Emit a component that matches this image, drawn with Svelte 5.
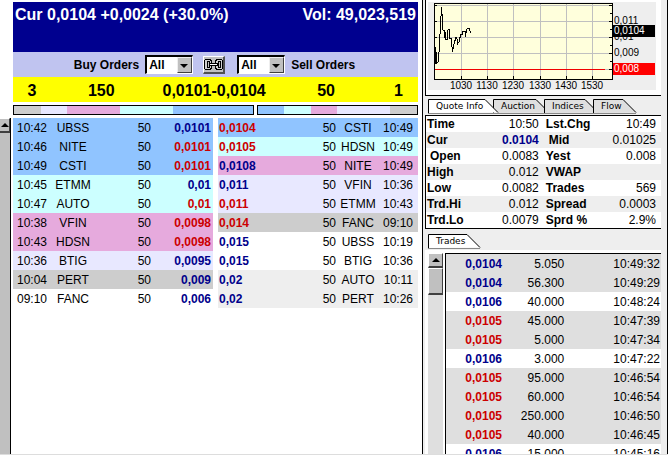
<script lang="ts">
	type Tone = "up" | "down";

	interface Order {
		time: string;
		maker: string;
		size: number;
		price: string;
		tone: Tone;
		level: string;
	}

	const order = (time: string, maker: string, price: string, tone: Tone, level: string): Order => ({
		time,
		maker,
		size: 50,
		price,
		tone,
		level,
	});

	const buys: Order[] = [
		order("10:42", "UBSS", "0,0101", "up", "blue"),
		order("10:46", "NITE", "0,0101", "down", "blue"),
		order("10:49", "CSTI", "0,0101", "down", "blue"),
		order("10:45", "ETMM", "0,01", "up", "cyan"),
		order("10:47", "AUTO", "0,01", "down", "cyan"),
		order("10:38", "VFIN", "0,0098", "down", "pink"),
		order("10:43", "HDSN", "0,0098", "down", "pink"),
		order("10:36", "BTIG", "0,0095", "up", "lilac"),
		order("10:04", "PERT", "0,009", "up", "gray"),
		order("09:10", "FANC", "0,006", "up", "plain"),
	];

	const sells: Order[] = [
		order("10:49", "CSTI", "0,0104", "down", "blue"),
		order("10:49", "HDSN", "0,0105", "down", "cyan"),
		order("10:49", "NITE", "0,0108", "up", "pink"),
		order("10:36", "VFIN", "0,011", "up", "lilac"),
		order("10:43", "ETMM", "0,011", "down", "lilac"),
		order("09:10", "FANC", "0,014", "down", "gray"),
		order("10:19", "UBSS", "0,015", "up", "plain"),
		order("10:36", "BTIG", "0,015", "up", "plain"),
		order("10:11", "AUTO", "0,02", "up", "pale"),
		order("10:26", "PERT", "0,02", "up", "pale"),
	];

	// Depth per price level, outermost level first on the buy side
	const buyDepth = [
		{ level: "gray", share: 1 },
		{ level: "lilac", share: 1 },
		{ level: "pink", share: 2 },
		{ level: "cyan", share: 2 },
		{ level: "blue", share: 3 },
	];
	const sellDepth = [
		{ level: "blue", share: 1 },
		{ level: "cyan", share: 1 },
		{ level: "pink", share: 1 },
		{ level: "lilac", share: 2 },
		{ level: "gray", share: 1 },
	];

	const quotes = [
		["Time", "10:50", "Lst.Chg", "10:49"],
		["Cur", "0.0104", "Mid", "0.01025"],
		["Open", "0.0083", "Yest", "0.008"],
		["High", "0.012", "VWAP", ""],
		["Low", "0.0082", "Trades", "569"],
		["Trd.Hi", "0.012", "Spread", "0.0003"],
		["Trd.Lo", "0.0079", "Sprd %", "2.9%"],
	];
	const indented = ["Open", "Mid"];

	const trades: { price: string; volume: string; time: string }[] = [
		{ price: "0,0104", volume: "5.050", time: "10:49:32" },
		{ price: "0,0104", volume: "56.300", time: "10:49:29" },
		{ price: "0,0106", volume: "40.000", time: "10:48:24" },
		{ price: "0,0105", volume: "45.000", time: "10:47:39" },
		{ price: "0,0105", volume: "5.000", time: "10:47:34" },
		{ price: "0,0106", volume: "3.000", time: "10:47:22" },
		{ price: "0,0105", volume: "95.000", time: "10:46:54" },
		{ price: "0,0105", volume: "60.000", time: "10:46:54" },
		{ price: "0,0105", volume: "250.000", time: "10:46:50" },
		{ price: "0,0105", volume: "40.000", time: "10:46:45" },
		{ price: "0,0106", volume: "15.000", time: "10:45:16" },
	];

	const tabs = [
		{ name: "Quote Info", width: 71 },
		{ name: "Auction", width: 57 },
		{ name: "Indices", width: 55 },
		{ name: "Flow", width: 44 },
	];
	let activeTab = $state("Quote Info");

	let buyFilter = $state("All");
	let sellFilter = $state("All");
	let linked = $state(true);

	// Linked filters follow each other
	function syncFilter(side: "buy" | "sell") {
		if (!linked) return;
		if (side === "buy") sellFilter = buyFilter;
		else buyFilter = sellFilter;
	}

	const chartTimes = ["1030", "1130", "1230", "1330", "1430", "1530"];
	const timeX = (i: number) => Math.round(33 + i * 26.2);
	const gridY = [3, 19, 35, 51, 67];
</script>

{#snippet tab(name: string, width: number, active: boolean, select: () => void)}
	<button class="tab" class:active style="width: {width}px" aria-pressed={active} onclick={select}>
		<svg {width} height="15" aria-hidden="true">
			<path d="M0.5 14 V0.5 H{width - 14} L{width - 1} 13.5" />
			<path class="edge" d="M0 14.5 H{width - 1}" />
		</svg>
		<span>{name}</span>
	</button>
{/snippet}

<div class="app">
	<main class="book">
		<div class="gutter">
			<button class="arrow" aria-label="Scroll up"></button>
		</div>
		<div class="panel">
			<header>
				<span>Cur 0,0104 +0,0024 (+30.0%)</span>
				<span>Vol: 49,023,519</span>
			</header>

			<div class="filters">
				<label for="buy-filter">Buy Orders</label>
				<div class="select">
					<select id="buy-filter" bind:value={buyFilter} onchange={() => syncFilter("buy")}>
						<option>All</option>
						<option>ECN</option>
					</select>
				</div>
				<button class="link" aria-label="Link filters" aria-pressed={linked} onclick={() => (linked = !linked)}>
					<svg width="19" height="11" viewBox="0 0 19 11" aria-hidden="true">
						<path d="M1.500 0.500 H6 L7.500 2 V9 L6 10.500 H1.500 L0.500 9.500 V1.500 Z M3 2.500 V8.500 H5 V2.500 Z" />
						<path d="M17.500 0.500 H13 L11.500 2 V9 L13 10.500 H17.500 L18.500 9.500 V1.500 Z M16 2.500 V8.500 H14 V2.500 Z" />
						<path class="pin" d="M5.500 4.500 H13.500 V6.500 H5.500 Z" />
					</svg>
				</button>
				<div class="select">
					<select id="sell-filter" bind:value={sellFilter} onchange={() => syncFilter("sell")}>
						<option>All</option>
						<option>ECN</option>
					</select>
				</div>
				<label for="sell-filter">Sell Orders</label>
			</div>

			<div class="inside">
				<div class="side buy">
					<span class="count">3</span>
					<span class="size">150</span>
					<span class="best">0,0101</span>
				</div>
				<div class="side sell">
					<span class="best">-0,0104</span>
					<span class="size">50</span>
					<span class="count">1</span>
				</div>
			</div>

			<div class="depth">
				<div class="bar" style="flex-grow: 3">
					{#each buyDepth as d}
						<i class={d.level} style="flex-grow: {d.share}"></i>
					{/each}
				</div>
				<div class="bar" style="flex-grow: 2">
					{#each sellDepth as d}
						<i class={d.level} style="flex-grow: {d.share}"></i>
					{/each}
				</div>
			</div>

			<div class="orders">
				<table aria-label="Buy orders">
					<colgroup><col class="w-time" /><col class="w-maker" /><col class="w-size" /><col /></colgroup>
					<tbody>
						{#each buys as o}
							<tr class={o.level}>
								<td class="first">{o.time}</td>
								<td class="center">{o.maker}</td>
								<td class="right">{o.size}</td>
								<td class="price right {o.tone}">{o.price}</td>
							</tr>
						{/each}
					</tbody>
				</table>
				<table aria-label="Sell orders">
					<colgroup><col /><col class="w-size" /><col class="w-maker" /><col class="w-time" /></colgroup>
					<tbody>
						{#each sells as o}
							<tr class={o.level}>
								<td class="price {o.tone}">{o.price}</td>
								<td class="right">{o.size}</td>
								<td class="center">{o.maker}</td>
								<td class="last">{o.time}</td>
							</tr>
						{/each}
					</tbody>
				</table>
			</div>
		</div>
	</main>

	<aside>
		<section class="chart">
			<svg viewBox="0 0 228 88" role="img" aria-label="Intraday price">
				<rect class="back" width="228" height="88" />
				<rect class="plot" x="6.5" y="1.5" width="178" height="76" />
				{#each gridY as y}
					<path class="grid" d="M7 {y + 0.5} H184" />
					<path class="tick" d="M7 {y + 0.5} h2 M181 {y + 0.5} h3" />
				{/each}
				{#each chartTimes as t, i}
					<path class="grid" d="M{timeX(i) + 0.5} 2 V77" />
					<path class="tick" d="M{timeX(i) + 0.5} 74 v3" />
					<text class="mid" x={timeX(i)} y="87">{t}</text>
				{/each}
				{#each [11, 27, 43, 59] as y}
					<path class="tick" d="M182 {y + 0.5} h2" />
				{/each}
				<path class="prev" d="M7 67.5 H177" />
				<path
					class="line"
					d="M7.5 45 V62 L8.5 50 V61 L10 60 L11 50 L12 32 L13.5 5 L14.5 18 L15 28 H16 V30 L17 36 V30 L18 38 L19.5 37 V29 L21 27 L22 37 L23 36 L24.5 50 L26 42 L28 35 L29.5 38 V42 L31 40 V36 L32.5 35 V32 H34.5 L35 29 H37 L37.5 35 L38.5 28 L40 26 L41 26 L42.5 31"
				/>
				<text x="186" y="22">0,011</text>
				<text x="186" y="38">0,01</text>
				<text x="186" y="54">0,009</text>
				<rect x="185" y="23" width="42" height="12" />
				<text class="tag" x="186" y="32">0,0104</text>
				<rect class="low" x="185" y="61" width="42" height="12" />
				<text class="tag" x="186" y="70">0,008</text>
			</svg>
		</section>

		<nav class="tabs">
			{#each tabs as t}
				{@render tab(t.name, t.width, t.name === activeTab, () => (activeTab = t.name))}
			{/each}
		</nav>
		<section class="quote">
			<table aria-label="Quote info">
				<colgroup><col class="q-label" /><col class="q-value" /><col class="q-label2" /><col /></colgroup>
				<tbody>
					{#each quotes as [a, av, b, bv]}
						<tr>
							<th scope="row" class:indented={indented.includes(a)}>{a}</th>
							<td class:current={a === "Cur"}>{av}</td>
							<th scope="row" class="second" class:indented={indented.includes(b)}>{b}</th>
							<td class="edge">{bv}</td>
						</tr>
					{/each}
				</tbody>
			</table>
		</section>

		<nav class="tabs lower">
			{@render tab("Trades", 53, true, () => {})}
		</nav>
		<section class="trades">
			<div class="scroll">
				<button class="arrow" aria-label="Scroll trades up"></button>
				<div class="thumb"></div>
			</div>
			<div class="list">
				<table aria-label="Trades">
					<colgroup><col class="t-price" /><col class="t-volume" /><col /></colgroup>
					<tbody>
						{#each trades as t}
							<tr class:fresh={t.price === "0,0106"}>
								<td class="price {t.price === '0,0105' ? 'down' : 'up'}">{t.price}</td>
								<td>{t.volume}</td>
								<td class="stamp">{t.time}</td>
							</tr>
						{/each}
					</tbody>
				</table>
			</div>
		</section>
	</aside>
</div>

<style>
	:global(body) {
		background: #fff;
		color: #000;
		font-family: "Liberation Sans", Arial, Helvetica, sans-serif;
		font-size: 12px;
	}
	.app {
		display: grid;
		grid-template-columns: minmax(0, 1fr) minmax(246px, 36%);
		height: 100vh;
		box-sizing: border-box;
		border-bottom: 1px solid #ddd;
		overflow: hidden;
	}
	button,
	select {
		font: inherit;
		color: inherit;
		margin: 0;
		padding: 0;
		border-radius: 0;
		cursor: pointer;
	}
	table {
		width: 100%;
		table-layout: fixed;
		border-collapse: collapse;
	}
	td,
	th {
		padding: 0;
		white-space: nowrap;
	}

	/* Order book */
	.book {
		display: flex;
		gap: 2px;
		min-height: 0;
	}
	.gutter {
		flex: none;
		width: 10px;
		margin-top: 118px;
		background: #c0c0c0;
		border-right: 1px solid #000;
	}
	.panel {
		flex: 1;
		min-width: 0;
		padding: 2px 4px 0 0;
		overflow: hidden;
	}
	.arrow {
		display: flex;
		align-items: center;
		justify-content: center;
		box-sizing: border-box;
		width: 100%;
		height: 15px;
		background: #c0c0c0;
		border: 1px solid #fff;
		border-right-color: #404040;
		border-bottom: 2px solid #404040;
	}
	.arrow::before {
		content: "";
		border: 4px solid transparent;
		border-top: none;
		border-bottom-color: #000;
	}
	.gutter .arrow {
		border-left: none;
	}
	header {
		display: flex;
		justify-content: space-between;
		min-height: 46px;
		padding: 4px 2px 0;
		background: #00008f;
		color: #fff;
		font-size: 16px;
		line-height: 18px;
		font-weight: bold;
	}
	.filters {
		display: flex;
		align-items: center;
		justify-content: center;
		gap: 6px;
		height: 25px;
		padding-right: 2px;
		background: #c0c4f0;
		font-weight: bold;
	}
	.select {
		position: relative;
		width: 48px;
		height: 19px;
	}
	.select select {
		appearance: none;
		box-sizing: border-box;
		width: 100%;
		height: 100%;
		padding-left: 2px;
		background: #fff;
		border: 2px solid #000;
		border-right: 1px solid #fff;
		border-bottom: 1px solid #fff;
		outline: none;
	}
	/* Drop-down button over the end of the field */
	.select::after {
		content: "";
		position: absolute;
		top: 2px;
		right: 1px;
		bottom: 1px;
		width: 15px;
		box-sizing: border-box;
		background: #c0c0c0;
		border: 1px solid #eee;
		border-right-color: #404040;
		border-bottom-color: #404040;
		pointer-events: none;
	}
	.select::before {
		content: "";
		position: absolute;
		z-index: 1;
		top: 9px;
		right: 5px;
		border: 4px solid transparent;
		border-bottom: none;
		border-top-color: #000;
		pointer-events: none;
	}
	.link {
		display: flex;
		align-items: center;
		justify-content: center;
		box-sizing: border-box;
		width: 22px;
		height: 18px;
		margin: 0 6px 0 4px;
		background: #c0c0c0;
		border: 1px solid #fff;
		border-right: 2px solid #505050;
		border-bottom: 2px solid #505050;
	}
	.link svg {
		flex: none;
	}
	.link path {
		fill: #d0d0d0;
		fill-rule: evenodd;
		stroke: #000;
		stroke-width: 1;
		shape-rendering: crispEdges;
	}
	.link .pin {
		fill: #fff;
	}
	.inside {
		display: flex;
		height: 25px;
		background: #ff0;
		font-size: 16px;
		line-height: 27px;
		font-weight: bold;
	}
	.side {
		display: flex;
		flex: 1;
		text-align: center;
	}
	.side.buy {
		flex: 0 0 49%;
	}
	.side .count {
		width: 19%;
	}
	.side .size {
		flex: 1;
	}
	.side .best {
		width: 30%;
	}
	.buy .best {
		text-align: right;
	}
	.sell .best {
		text-align: left;
	}
	.depth {
		display: flex;
		gap: 3px;
		margin: 3px 0;
	}
	.bar {
		display: flex;
		flex-basis: 0;
		height: 8px;
		border: 1px solid #000;
	}
	.bar i {
		flex-basis: 0;
	}
	.orders {
		display: flex;
		align-items: flex-start;
		gap: 5px;
	}
	.orders table {
		flex: 1;
		min-width: 0;
	}
	.orders td {
		height: 19px;
	}
	.w-time {
		width: 19%;
	}
	.w-maker {
		width: 22%;
	}
	.w-size {
		width: 28%;
	}
	.first {
		padding-left: 4px;
	}
	.last {
		padding-right: 5px;
		text-align: right;
	}
	.center {
		text-align: center;
	}
	.right {
		text-align: right;
	}
	.price {
		padding: 0 2px 0 1px;
		font-weight: bold;
	}
	.up {
		color: #00008b;
	}
	.down {
		color: #c00;
	}
	.blue {
		background: #90c4ff;
	}
	.cyan {
		background: #cff;
	}
	.pink {
		background: #e6aadd;
	}
	.lilac {
		background: #e8e8ff;
	}
	.gray {
		background: #cdcdcd;
	}
	.pale {
		background: #eee;
	}

	/* Right-hand column */
	aside {
		display: flex;
		flex-direction: column;
		min-width: 0;
		min-height: 0;
		padding-left: 2px;
		background: #eee;
		border-left: 1px solid #000;
		border-right: 1px solid #000;
	}
	.chart,
	.quote {
		margin-right: 6px;
		background: #fff;
		border: 1px solid #000;
		border-right: none;
	}
	.chart {
		padding: 2px 5px 5px 2px;
		border-top: none;
	}
	.chart svg {
		display: block;
		width: 100%;
		font-size: 10px;
	}
	.chart path,
	.chart rect {
		shape-rendering: crispEdges;
	}
	.back {
		fill: #eee;
	}
	.plot {
		fill: #ffffdc;
		stroke: #000;
	}
	.grid {
		stroke: #c0c0c0;
	}
	.tick {
		stroke: #000;
	}
	.prev {
		stroke: #f00000;
	}
	.line {
		fill: none;
		stroke: #000;
	}
	.low {
		fill: #f00;
	}
	.tag {
		fill: #fff;
	}
	.mid {
		text-anchor: middle;
	}
	.tabs {
		display: flex;
		padding: 3px 0 1px 3px;
	}
	.tab {
		position: relative;
		flex: none;
		height: 15px;
		margin-right: -6px;
		background: none;
		border: none;
		font-family: "DejaVu Sans", Verdana, sans-serif;
		font-size: 9px;
		line-height: 15px;
		text-align: left;
	}
	.tab.active {
		z-index: 1;
	}
	.tab svg {
		position: absolute;
		inset: 0;
		fill: #dfdfdf;
		stroke: #000;
	}
	.tab.active svg {
		fill: #fff;
	}
	.tab .edge {
		stroke: #888;
	}
	.tab span {
		position: relative;
		padding-left: 8px;
	}
	.quote tr:nth-child(even) {
		background: #eee;
	}
	.quote th,
	.quote td {
		height: 16px;
		text-align: right;
	}
	.quote th {
		padding-left: 1px;
		text-align: left;
	}
	.quote th.indented {
		padding-left: 4px;
	}
	.quote th.second {
		padding-left: 7px;
	}
	.quote th.second.indented {
		padding-left: 10px;
	}
	.quote .edge {
		padding-right: 5px;
	}
	.quote .current {
		color: #00008b;
		font-weight: bold;
	}
	.q-label {
		width: 19%;
	}
	.q-value {
		width: 29%;
	}
	.q-label2 {
		width: 23%;
	}
	.lower {
		padding-top: 5px;
	}
	.trades {
		flex: 1;
		display: flex;
		gap: 2px;
		min-height: 0;
		margin-right: 6px;
		padding: 3px 0 0 3px;
		background: #fff;
	}
	.scroll {
		flex: none;
		width: 15px;
		background: #dfdfdf;
	}
	.thumb {
		box-sizing: border-box;
		height: 27px;
		background: #c0c0c0;
		border: 1px solid #fff;
		border-right-color: #404040;
		border-bottom: 2px solid #404040;
	}
	.list {
		flex: 1;
		min-width: 0;
		overflow: hidden;
		border-top: 1px solid #000;
		border-left: 1px solid #000;
	}
	.trades tr {
		background: #dfdfdf;
	}
	.trades tr.fresh {
		background: #fff;
	}
	.trades td {
		height: 19px;
		text-align: right;
	}
	.trades .stamp {
		padding-right: 1px;
	}
	.t-price {
		width: 27%;
	}
	.t-volume {
		width: 28%;
	}
</style>
